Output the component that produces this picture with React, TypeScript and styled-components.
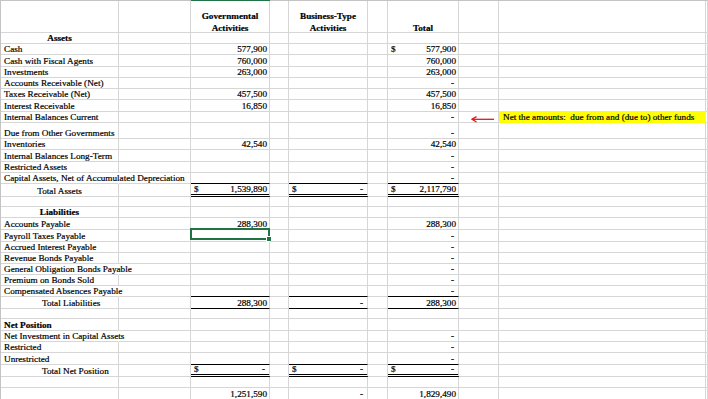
import styled, { createGlobalStyle, css } from 'styled-components'

const GRID = '#d6d6d6'
const FRAME = '#c4c4c4'
const XL_GREEN = '#217346'

const GlobalStyle = createGlobalStyle`
  html, body {
    margin: 0;
    padding: 0;
    background: #fff;
  }
  body {
    font-family: "Liberation Serif", "Times New Roman", serif;
    color: #000;
  }
`

type LabelKind = 'plain' | 'heading' | 'section' | 'center' | 'indent'

type Line = {
  h: number
  label?: string
  kind?: LabelKind
  gov?: string
  bus?: string
  total?: string
  rule?: 'single' | 'double'
  spill?: boolean
  note?: string
  selected?: boolean
}

const lines: Line[] = [
  { h: 11, label: 'Assets', kind: 'heading' },
  { h: 11, label: 'Cash', gov: '577,900', total: '$577,900' },
  { h: 12, label: 'Cash with Fiscal Agents', gov: '760,000', total: '760,000' },
  { h: 11, label: 'Investments', gov: '263,000', total: '263,000' },
  { h: 11, label: 'Accounts Receivable (Net)', total: '-' },
  { h: 11, label: 'Taxes Receivable (Net)', gov: '457,500', total: '457,500' },
  { h: 12, label: 'Interest Receivable', gov: '16,850', total: '16,850' },
  { h: 11, label: 'Internal Balances Current', total: '-', note: 'Net the amounts:  due from and (due to) other funds' },
  { h: 16, label: 'Due from Other Governments', total: '-' },
  { h: 11, label: 'Inventories', gov: '42,540', total: '42,540' },
  { h: 12, label: 'Internal Balances Long-Term', total: '-' },
  { h: 11, label: 'Restricted Assets', total: '-' },
  { h: 11, label: 'Capital Assets, Net of Accumulated Depreciation', total: '-', rule: 'single', spill: true },
  { h: 13, label: 'Total Assets', kind: 'center', gov: '$1,539,890', bus: '$-', total: '$2,117,790', rule: 'double' },
  { h: 10 },
  { h: 11, label: 'Liabilities', kind: 'heading' },
  { h: 12, label: 'Accounts Payable', gov: '288,300', total: '288,300' },
  { h: 12, label: 'Payroll Taxes Payable', total: '-', selected: true },
  { h: 11, label: 'Accrued Interest Payable', total: '-' },
  { h: 11, label: 'Revenue Bonds Payable', total: '-' },
  { h: 11, label: 'General Obligation Bonds Payable', total: '-', spill: true },
  { h: 11, label: 'Premium on Bonds Sold', total: '-' },
  { h: 11, label: 'Compensated Absences Payable', total: '-', rule: 'single', spill: true },
  { h: 12, label: 'Total Liabilities', kind: 'indent', gov: '288,300', bus: '-', total: '288,300', rule: 'single' },
  { h: 10 },
  { h: 12, label: 'Net Position', kind: 'section' },
  { h: 11, label: 'Net Investment in Capital Assets', total: '-', spill: true },
  { h: 11, label: 'Restricted', total: '-' },
  { h: 12, label: 'Unrestricted', total: '-', rule: 'single' },
  { h: 12, label: 'Total Net Position', kind: 'indent', gov: '$-', bus: '$-', total: '$-', rule: 'double' },
  { h: 11 },
  { h: 12, gov: '1,251,590', bus: '-', total: '1,829,490' },
]

const Page = styled.div`
  width: 708px;
  height: 399px;
  overflow: hidden;
`

const Sheet = styled.div<{ $rows: string }>`
  display: grid;
  grid-template-columns: 118px 72px 79px 19px 79px 20px 71px 40px 207px 1fr;
  grid-template-rows: ${p => p.$rows};
  border-top: 1px solid ${FRAME};
  border-left: 1px solid ${FRAME};
  font-size: 9.2px;
  line-height: 9px;
  -webkit-text-stroke: 0.2px #000;
`

const Cell = styled.div<{ $rule?: 'single' | 'double'; $noRight?: boolean }>`
  position: relative;
  display: flex;
  align-items: flex-end;
  min-width: 0;
  white-space: nowrap;
  border-right: 1px solid ${p => (p.$noRight ? 'transparent' : GRID)};
  border-bottom: 1px solid ${GRID};
  ${p =>
    p.$rule === 'single' &&
    css`
      border-bottom-color: #000;
    `}
  ${p =>
    p.$rule === 'double' &&
    css`
      border-bottom: 3px double #000;
    `}
`

const HeadCell = styled(Cell)<{ $active?: boolean }>`
  justify-content: center;
  text-align: center;
  white-space: normal;
  font-weight: bold;
  line-height: 12px;
  ${p =>
    p.$active &&
    css`
      box-shadow: 0 -1px 0 ${XL_GREEN};
    `}
`

const HeadText = styled.span`
  margin-bottom: -2px;
`

const Label = styled.span<{ $kind: LabelKind }>`
  padding-left: 3px;
  ${p =>
    (p.$kind === 'heading' || p.$kind === 'section') &&
    css`
      font-weight: bold;
    `}
  ${p =>
    (p.$kind === 'heading' || p.$kind === 'center') &&
    css`
      width: 100%;
      padding-left: 0;
      text-align: center;
    `}
  ${p =>
    p.$kind === 'indent' &&
    css`
      padding-left: 41px;
    `}
`

const Dollar = styled.span`
  padding-left: 3px;
`

const Figure = styled.span<{ $dash?: boolean }>`
  margin-left: auto;
  padding-right: ${p => (p.$dash ? 4 : 2)}px;
`

const Selection = styled.div`
  position: absolute;
  left: -1px;
  top: -2px;
  right: -1px;
  bottom: 1px;
  border: 2px solid ${XL_GREEN};
  pointer-events: none;

  &::after {
    content: '';
    position: absolute;
    right: -4px;
    bottom: -4px;
    width: 4px;
    height: 4px;
    background: ${XL_GREEN};
    border: 1px solid #fff;
  }
`

const NoteCell = styled(Cell)`
  background: #ffff00;
  border-right-color: #ffff00;
  border-bottom-color: #ffff00;
  margin-top: -1px;
  white-space: pre;
`

const NoteText = styled.span`
  padding-left: 4px;
`

const Arrow = styled.svg`
  position: absolute;
  left: 12px;
  top: 3px;
  overflow: visible;
`

const Amount = ({ value }: { value?: string }) => {
  if (!value) return null
  const dollar = value.startsWith('$')
  const v = dollar ? value.slice(1) : value
  return (
    <>
      {dollar && <Dollar>$</Dollar>}
      <Figure $dash={v === '-'}>{v}</Figure>
    </>
  )
}

const HeaderRow = () => (
  <>
    <Cell />
    <Cell />
    <HeadCell $active>
      <HeadText>Governmental Activities</HeadText>
    </HeadCell>
    <Cell />
    <HeadCell>
      <HeadText>Business-Type Activities</HeadText>
    </HeadCell>
    <Cell />
    <HeadCell>
      <HeadText>Total</HeadText>
    </HeadCell>
    <Cell />
    <Cell />
    <Cell />
  </>
)

const SheetRow = ({ line }: { line: Line }) => (
  <>
    <Cell $noRight={line.spill}>
      {line.label && <Label $kind={line.kind ?? 'plain'}>{line.label}</Label>}
    </Cell>
    <Cell />
    <Cell $rule={line.rule}>
      <Amount value={line.gov} />
      {line.selected && <Selection />}
    </Cell>
    <Cell />
    <Cell $rule={line.rule}>
      <Amount value={line.bus} />
    </Cell>
    <Cell />
    <Cell $rule={line.rule}>
      <Amount value={line.total} />
    </Cell>
    <Cell>
      {line.note && (
        <Arrow width="24" height="8" viewBox="0 0 24 8">
          <path d="M1 4.3 H23" stroke="#e3161b" strokeWidth="1.3" fill="none" />
          <path d="M5.5 1.6 L1 4.3 L5.5 7" stroke="#e3161b" strokeWidth="1.3" fill="none" />
        </Arrow>
      )}
    </Cell>
    {line.note ? (
      <NoteCell>
        <NoteText>{line.note}</NoteText>
      </NoteCell>
    ) : (
      <Cell />
    )}
    <Cell />
  </>
)

export default function App() {
  const rows = ['32px', ...lines.map(l => `${l.h}px`)].join(' ')
  return (
    <Page>
      <GlobalStyle />
      <Sheet $rows={rows}>
        <HeaderRow />
        {lines.map((line, i) => (
          <SheetRow key={i} line={line} />
        ))}
      </Sheet>
    </Page>
  )
}
